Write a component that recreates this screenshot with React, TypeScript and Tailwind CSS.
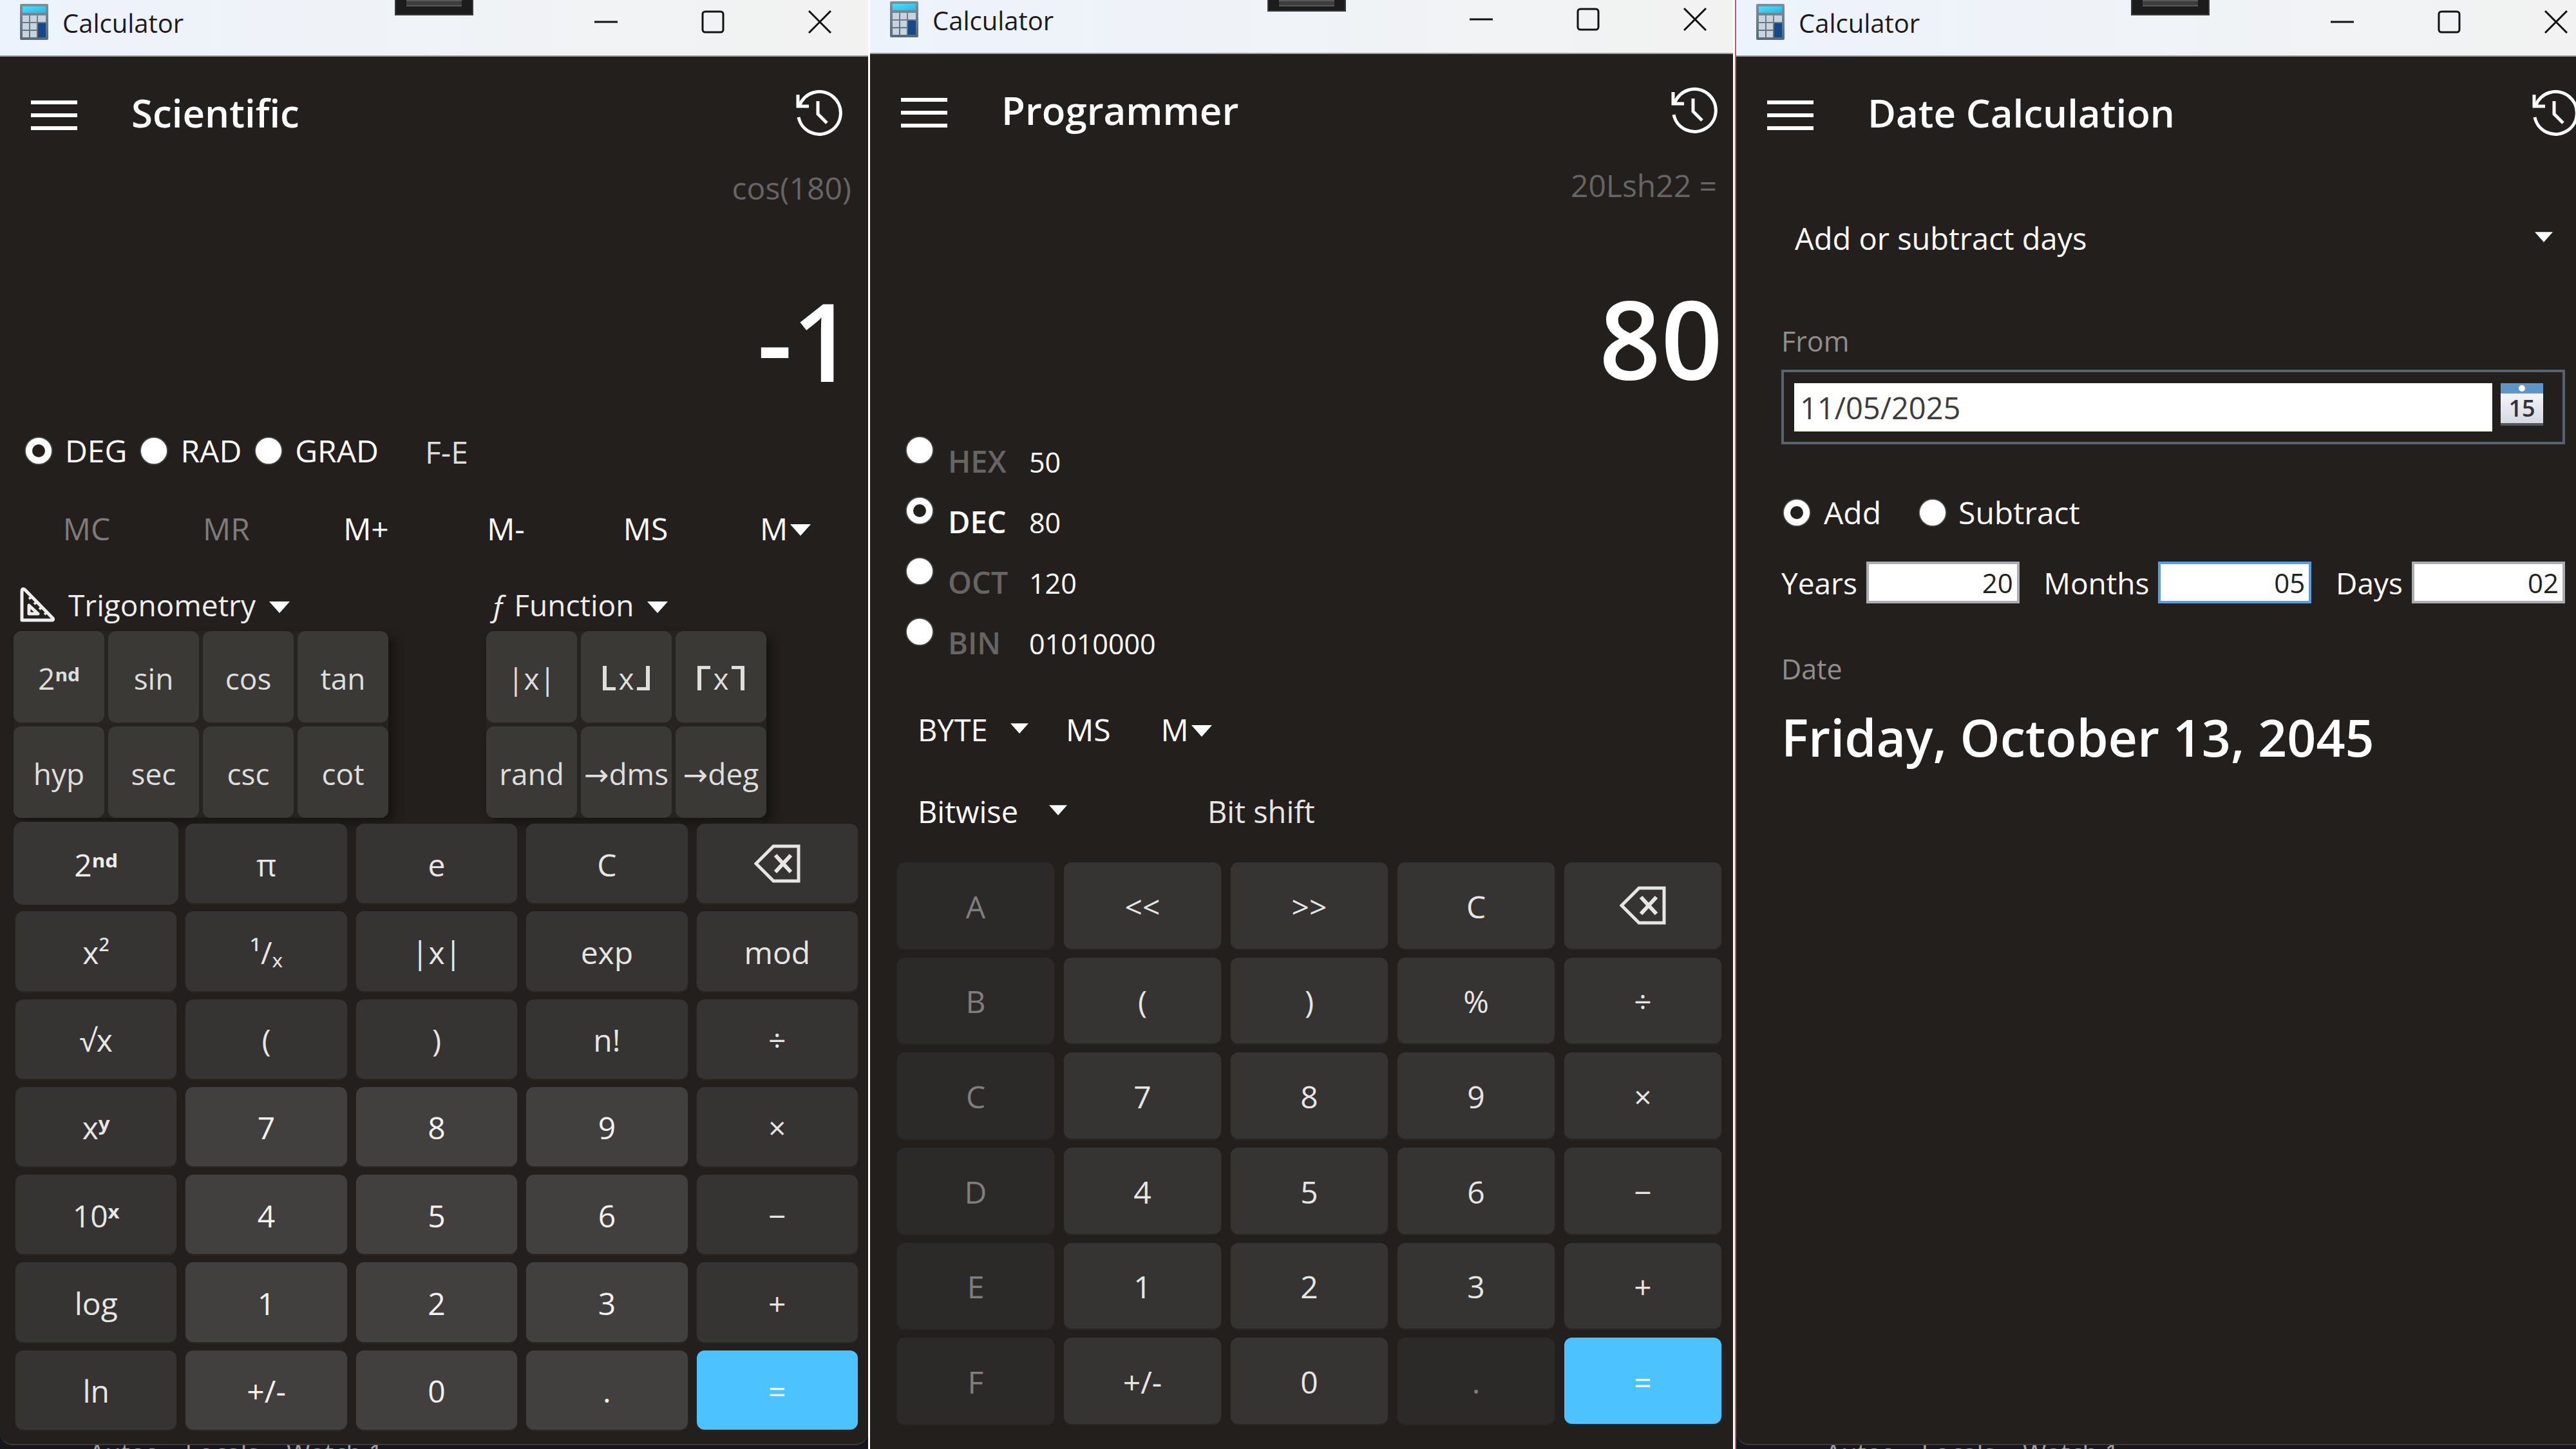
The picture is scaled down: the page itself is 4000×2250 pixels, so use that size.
import type { ReactNode } from "react";

const FONT = "font-['Open_Sans','Noto_Sans','DejaVu_Sans',sans-serif]";

function CalculatorLogo() {
  return (
    <svg viewBox="0 0 44 56" className="h-14 w-11" aria-hidden="true">
      <defs>
        <linearGradient id="lcd" x1="0" y1="0" x2="1" y2="1">
          <stop offset="0" stopColor="#4fe0fa" />
          <stop offset="1" stopColor="#27b4ea" />
        </linearGradient>
        <linearGradient id="case" x1="0" y1="0" x2="0" y2="1">
          <stop offset="0" stopColor="#7f8f9b" />
          <stop offset="1" stopColor="#566a78" />
        </linearGradient>
      </defs>
      <rect width="44" height="56" rx="2" fill="url(#case)" />
      <rect x="4" y="4" width="36" height="10" fill="url(#lcd)" />
      {[18, 30, 42].map((y) =>
        [4, 16, 28].map((x) => (
          <rect key={`${x}-${y}`} x={x} y={y} width={x === 28 ? 12 : 10} height="10" fill="#c9d3de" />
        )),
      )}
      <rect x="28" y="30" width="12" height="22" fill="#17498a" />
    </svg>
  );
}

function HistoryIcon() {
  return (
    <svg viewBox="0 0 72 72" className="size-[72px]" fill="none" stroke="#fff" strokeWidth="5" aria-hidden="true">
      <path d="M5 26A33 33 0 1 1 4 43" />
      <path d="M3 8V26H20" />
      <path d="M34 18V38L48 52" />
    </svg>
  );
}

function Triangle({ small = false }: { small?: boolean }) {
  return (
    <svg viewBox="0 0 32 18" className={small ? "h-4 w-7" : "h-[18px] w-8"} aria-hidden="true">
      <path d="M0 0H32L16 18Z" fill="#fff" />
    </svg>
  );
}

function SetSquare() {
  return (
    <svg viewBox="0 0 54 54" className="size-[54px]" fill="none" stroke="#eee" strokeWidth="5" strokeLinejoin="round" aria-hidden="true">
      <path d="M3 7Q3 0 8 4L51 48Q53 51 49 51H3Z" />
      <path d="M14 28V41H28Z" />
      <path d="M14 18l5-4M22 26l5-4M30 34l5-4M38 42l5-4" strokeWidth="4" />
    </svg>
  );
}

function Backspace() {
  return (
    <svg viewBox="0 0 72 60" className="h-[60px] w-[72px]" fill="none" stroke="#e6e6e4" strokeWidth="5" aria-hidden="true">
      <path d="M30 3H69V57H30L3 30Z" />
      <path d="M33 17L57 43M57 17L33 43" strokeWidth="6" />
    </svg>
  );
}

function CalendarIcon() {
  return (
    <span className="flex h-[66px] w-[66px] flex-col border-b-4 border-[#555] bg-gradient-to-b from-white to-[#d5d9e2]">
      <span className="flex h-4 items-center justify-center bg-[#5a95cc]">
        <span className="size-2.5 rounded-full bg-white" />
      </span>
      <span className="text-center text-[36px] leading-[46px] font-semibold text-[#333]">15</span>
    </span>
  );
}

type WindowProps = {
  title: string;
  className: string;
  barHeight: string;
  tabHeight: string;
  debugStrip?: boolean;
  children: ReactNode;
};

function CalcWindow({ title, className, barHeight, tabHeight, debugStrip, children }: WindowProps) {
  return (
    <section aria-label={`${title} calculator`} className={`relative flex min-h-screen flex-col bg-[#17171b] ${className}`}>
      <div className="absolute inset-x-0 top-0 flex justify-center">
        <div className={`flex w-[122px] flex-col items-center border-x-2 border-b-2 border-[#3a3a3a] bg-[#1c1c1c] ${tabHeight}`}>
          <span className="h-2.5 w-[86px] border-y-2 border-[#5a5a5a] bg-[#3c3c3c]" />
        </div>
      </div>
      <div
        className={`flex items-end justify-between border-b-2 border-[#9a9a98] bg-gradient-to-r from-[#edf3fc] to-[#f2f2f1] pr-[57px] pb-[22px] pl-[31px] ${barHeight}`}
      >
        <div className="flex items-center gap-[22px]">
          <CalculatorLogo />
          <span className="pt-1 text-[40px] leading-[56px] text-[#1b1b1b]">Calculator</span>
        </div>
        <div className="flex items-center gap-[130px] pb-3">
          <button type="button" aria-label="Minimize">
            <svg viewBox="0 0 36 36" className="size-9" stroke="#111" strokeWidth="3">
              <path d="M0 18H36" />
            </svg>
          </button>
          <button type="button" aria-label="Maximize">
            <svg viewBox="0 0 36 36" className="size-9" fill="none" stroke="#111" strokeWidth="3">
              <rect x="2" y="2" width="32" height="32" rx="4" />
            </svg>
          </button>
          <button type="button" aria-label="Close">
            <svg viewBox="0 0 36 36" className="size-9" stroke="#111" strokeWidth="3">
              <path d="M1 1L35 35M35 1L1 35" />
            </svg>
          </button>
        </div>
      </div>
      <div
        className={`flex flex-1 flex-col bg-[#231f1c] ${debugStrip ? "rounded-b-[20px] border-b-2 border-[#3c3b3a]" : ""}`}
      >
        <header className="flex h-[174px] items-center pr-[40px] pl-12">
          <button type="button" aria-label="Open navigation" className="flex w-[72px] flex-col gap-[14px] pt-2">
            <span className="h-[6px] bg-white" />
            <span className="h-[6px] bg-white" />
            <span className="h-[6px] bg-white" />
          </button>
          <h1 className="ml-[84px] flex-1 text-[60px] leading-[80px] font-semibold text-white">{title}</h1>
          <button type="button" aria-label="History">
            <HistoryIcon />
          </button>
        </header>
        {children}
      </div>
      {debugStrip && (
        <div className="flex h-[6px] gap-[42px] overflow-hidden pl-[138px] text-[40px] leading-[24px] text-[#a0a0a0]">
          <span>Autos</span>
          <span>Locals</span>
          <span>Watch 1</span>
        </div>
      )}
    </section>
  );
}

function Display({ expression, value, expressionPad, valuePad }: Record<"expression" | "value" | "expressionPad" | "valuePad", string>) {
  return (
    <div className="flex flex-col text-right">
      <p className={`text-[48px] leading-[60px] text-[#666563] ${expressionPad}`}>{expression}</p>
      <output className={`mt-[106px] block text-[168px] leading-[200px] font-semibold text-white ${valuePad}`}>{value}</output>
    </div>
  );
}

function Radio({ id, name, checked = false }: { id: string; name: string; checked?: boolean }) {
  return (
    <input
      id={id}
      type="radio"
      name={name}
      defaultChecked={checked}
      className="size-10 shrink-0 appearance-none rounded-full border-[10px] border-white bg-white shadow-[0_0_2px_1px_#777] checked:bg-[#231f1c]"
    />
  );
}

/* Raised letters are drawn heavier than the base so they stay legible. */
function KeyText({ label }: { label: string }) {
  const match = label.match(/^(.+?)([ⁿᵈʸˣ]+)$/);
  if (!match) return <>{label}</>;
  return (
    <span>
      {match[1]}
      <span className="font-bold">{match[2]}</span>
    </span>
  );
}

type Tone = "op" | "digit" | "off" | "equals" | "raised";
const TONES: Record<Tone, string> = {
  op: "bg-[#353432] text-[#e6e6e4]",
  digit: "bg-[#42403e] text-[#f2f2f0]",
  off: "bg-[#2b2a28] text-[#7f7e7c]",
  equals: "bg-[#4cc2ff] text-white",
  raised: "bg-[#373634] text-[#eeeeec] ring-[3px] ring-[#373634]",
};

function Key({ label, tone }: { label: string; tone: Tone }) {
  const isBack = label === "back";
  return (
    <button
      type="button"
      disabled={tone === "off"}
      aria-label={isBack ? "Backspace" : undefined}
      className={`flex items-center justify-center rounded-xl text-[48px] leading-[60px] shadow-[0_2px_3px_#2b2927] ${isBack ? "" : "pt-1"} ${TONES[tone]}`}
    >
      {isBack ? <Backspace /> : <KeyText label={label} />}
    </button>
  );
}

const scientificKeys = [
  ["2ⁿᵈ", "π", "e", "C", "back"],
  ["x²", "¹/ₓ", "|x|", "exp", "mod"],
  ["√x", "(", ")", "n!", "÷"],
  ["xʸ", "7", "8", "9", "×"],
  ["10ˣ", "4", "5", "6", "−"],
  ["log", "1", "2", "3", "+"],
  ["ln", "+/-", "0", ".", "="],
];

function scientificTone(row: number, col: number): Tone {
  if (row === 0 && col === 0) return "raised";
  if (row === 6 && col === 4) return "equals";
  return row > 2 && col > 0 && col < 4 ? "digit" : "op";
}

const programmerKeys = [
  ["A", "<<", ">>", "C", "back"],
  ["B", "(", ")", "%", "÷"],
  ["C", "7", "8", "9", "×"],
  ["D", "4", "5", "6", "−"],
  ["E", "1", "2", "3", "+"],
  ["F", "+/-", "0", ".", "="],
];

function programmerTone(row: number, col: number): Tone {
  if (row === 5 && col === 4) return "equals";
  return col === 0 || (row === 5 && col === 3) ? "off" : "op";
}

/* An x between wide floor or ceiling brackets. */
function Bracketed({ kind }: { kind: "floor" | "ceiling" }) {
  const edge = kind === "floor" ? "border-b-[5px]" : "border-t-[5px]";
  return (
    <span className="flex items-center gap-1">
      <span className={`h-[38px] w-5 border-l-[6px] border-[#dededc] ${edge}`} />
      x
      <span className={`h-[38px] w-5 border-r-[6px] border-[#dededc] ${edge}`} />
    </span>
  );
}

function MenuPanel({ keys, cols }: { keys: string[]; cols: string }) {
  return (
    <div className={`grid w-max gap-[6px] rounded-xl bg-[#262321] shadow-[10px_8px_14px_#171614] ${cols}`}>
      {keys.map((k) => (
        <button
          key={k}
          type="button"
          aria-label={k}
          className="flex h-[142px] items-center justify-center rounded-xl bg-[#3a3936] pt-1 text-[46px] leading-[60px] whitespace-nowrap text-[#dededc]"
        >
          {k === "floor" || k === "ceiling" ? <Bracketed kind={k} /> : <KeyText label={k} />}
        </button>
      ))}
    </div>
  );
}

function Scientific() {
  const modes = ["DEG", "RAD", "GRAD"];
  const memory = ["MC", "MR", "M+", "M-", "MS"];
  return (
    <>
      <Display expression="cos(180)" value="-1" expressionPad="pr-[26px]" valuePad="pr-[22px]" />
      <div className="mt-[40px] flex items-center pl-10 text-[48px] leading-[60px] text-white">
        {modes.map((m) => (
          <div key={m} className="mr-[22px] flex items-center gap-[21px]">
            <Radio id={m} name="angle" checked={m === "DEG"} />
            <label htmlFor={m}>{m}</label>
          </div>
        ))}
        <button type="button" className="ml-[50px] pt-1 text-[#dcdcda]">
          F-E
        </button>
      </div>
      <div className="mt-[59px] grid grid-cols-6 pr-5 pl-[26px] text-[48px] leading-[60px] text-white">
        {memory.map((m, i) => (
          <button key={m} type="button" disabled={i < 2} className="disabled:text-[#7d7c7a]">
            {m}
          </button>
        ))}
        <button type="button" aria-label="Memory list" className="flex items-center justify-center gap-1">
          M
          <span className="pt-1">
            <Triangle />
          </span>
        </button>
      </div>
      <div className="mt-[58px] flex pl-[21px]">
        <div className="w-[734px]">
          <button type="button" className="mb-[11px] flex items-center gap-[21px] pl-[10px] text-[46px] leading-[60px] text-[#eee]">
            <SetSquare />
            Trigonometry
            <span className="pt-2">
              <Triangle />
            </span>
          </button>
          <MenuPanel cols="grid-cols-[repeat(4,141px)]" keys={["2ⁿᵈ", "sin", "cos", "tan", "hyp", "sec", "csc", "cot"]} />
        </div>
        <div>
          <button type="button" className="mb-[11px] flex items-center gap-[21px] pl-[6px] text-[46px] leading-[60px] text-[#eee]">
            <span>
              <i>ƒ</i> Function
            </span>
            <span className="pt-2">
              <Triangle />
            </span>
          </button>
          <MenuPanel cols="grid-cols-[repeat(3,141px)]" keys={["|x|", "floor", "ceiling", "rand", "→dms", "→deg"]} />
        </div>
      </div>
      <div className="mt-[9px] mb-[22px] grid flex-1 auto-rows-fr grid-cols-5 gap-x-[14px] gap-y-[13px] pr-4 pl-6">
        {scientificKeys.flatMap((row, r) => row.map((k, c) => <Key key={`${r}-${c}`} label={k} tone={scientificTone(r, c)} />))}
      </div>
    </>
  );
}

function DropDown({ label, options, width }: { label: string; options: string[]; width: string }) {
  return (
    <div className={`flex items-center ${width}`}>
      <select
        aria-label={label}
        className="-mr-7 w-full appearance-none bg-transparent text-[47px] leading-[60px] text-white"
      >
        {options.map((o) => (
          <option key={o}>{o}</option>
        ))}
      </select>
      <span className="pointer-events-none pb-1">
        <Triangle small />
      </span>
    </div>
  );
}

function Programmer() {
  const bases = [
    ["HEX", "50"],
    ["DEC", "80"],
    ["OCT", "120"],
    ["BIN", "01010000"],
  ];
  return (
    <>
      <Display expression="20Lsh22 =" value="80" expressionPad="pr-[41px]" valuePad="pr-[32px]" />
      <div className="mt-[55px] pl-[57px]">
        {bases.map(([base, value]) => (
          <div key={base} className="flex h-[94px] items-start gap-6">
            <Radio id={base} name="base" checked={base === "DEC"} />
            <div className="flex items-baseline pt-[7px] leading-[60px]">
              <label
                htmlFor={base}
                className={`w-[126px] text-[47px] font-semibold ${base === "DEC" ? "text-white" : "text-[#666563]"}`}
              >
                {base}
              </label>
              <span className="text-[43px] text-white">{value}</span>
            </div>
          </div>
        ))}
      </div>
      <div className="mt-[48px] flex items-center pl-[74px] text-[48px] leading-[60px] text-white">
        <DropDown label="Word size" options={["BYTE", "WORD", "DWORD", "QWORD"]} width="w-[172px]" />
        <button type="button" className="ml-[58px]">
          MS
        </button>
        <button type="button" aria-label="Memory list" className="ml-[78px] flex items-center gap-1">
          M
          <span className="pt-1">
            <Triangle />
          </span>
        </button>
      </div>
      <div className="mt-[67px] flex items-center pl-[74px] text-[47px] leading-[60px] text-[#e6e6e4]">
        <DropDown label="Bitwise" options={["Bitwise", "AND", "OR", "NOT", "XOR"]} width="w-[232px]" />
        <button type="button" className="ml-[218px]">
          Bit shift
        </button>
      </div>
      <div className="mt-[49px] mb-[39px] grid flex-1 auto-rows-fr grid-cols-5 gap-x-[15px] gap-y-[14px] pr-[34px] pl-[42px]">
        {programmerKeys.flatMap((row, r) => row.map((k, c) => <Key key={`${r}-${c}`} label={k} tone={programmerTone(r, c)} />))}
      </div>
    </>
  );
}

function DateCalculation() {
  const fields = [
    ["Years", "20"],
    ["Months", "05"],
    ["Days", "02"],
  ];
  return (
    <>
      <div className="mt-[78px] pr-[80px] pl-[91px]">
        <DropDown label="Mode" options={["Add or subtract days", "Difference between dates"]} width="w-full" />
      </div>
      <div className="mt-[105px] flex flex-col pr-[61px] pl-[70px]">
        <label htmlFor="from" className="text-[43px] leading-[50px] text-[#8f8e8c]">
          From
        </label>
        <div className="mt-[19px] flex items-start border-4 border-[#56626e] pt-[17px] pr-[30px] pb-4 pl-4">
          <input
            id="from"
            defaultValue="11/05/2025"
            className="h-[75px] min-w-0 flex-1 bg-white px-[9px] text-[47px] leading-[60px] text-[#3c3c3c]"
          />
          <button type="button" aria-label="Pick a date" className="ml-[13px]">
            <CalendarIcon />
          </button>
        </div>
        <div className="mt-[76px] flex items-center gap-[60px] pl-1 text-[48px] leading-[60px] text-white">
          <div className="flex items-center gap-[22px]">
            <Radio id="add" name="direction" checked />
            <label htmlFor="add">Add</label>
          </div>
          <div className="flex items-center gap-[20px]">
            <Radio id="subtract" name="direction" />
            <label htmlFor="subtract">Subtract</label>
          </div>
        </div>
        <div className="mt-[46px] flex items-center justify-between text-[46px] leading-[60px] text-white">
          {fields.map(([name, value]) => (
            <div key={name} className="flex items-center gap-[14px]">
              <label htmlFor={name}>{name}</label>
              <input
                id={name}
                defaultValue={value}
                className={`h-[65px] w-[238px] border-4 bg-white pr-[6px] text-right text-[42px] leading-[50px] text-[#222] ${
                  name === "Months" ? "border-[#569de5]" : "border-[#abadb3]"
                }`}
              />
            </div>
          ))}
        </div>
        <p className="mt-[77px] text-[43px] leading-[50px] text-[#8f8e8c]">Date</p>
        <output className="mt-[31px] block text-[79px] leading-[100px] font-semibold whitespace-nowrap text-white">
          Friday, October 13, 2045
        </output>
      </div>
    </>
  );
}

export default function App() {
  return (
    <main className={`grid min-h-screen grid-cols-[1348fr_3px_1340fr_3px_1306fr] overflow-hidden bg-white ${FONT}`}>
      <div className="min-w-0 overflow-hidden">
        <CalcWindow title="Scientific" className="w-full" barHeight="h-[88px]" tabHeight="h-6" debugStrip>
          <Scientific />
        </CalcWindow>
      </div>
      <div className="bg-white" />
      <div className="min-w-0 overflow-hidden">
        <CalcWindow title="Programmer" className="w-[calc(100%+16px)]" barHeight="h-[84px]" tabHeight="h-[18px]">
          <Programmer />
        </CalcWindow>
      </div>
      <div className="bg-white" />
      <div className="min-w-0 overflow-hidden">
        <CalcWindow
          title="Date Calculation"
          className="w-[calc(100%+44px)] border-l-2 border-[#a3666a]"
          barHeight="h-[88px]"
          tabHeight="h-6"
          debugStrip
        >
          <DateCalculation />
        </CalcWindow>
      </div>
    </main>
  );
}
